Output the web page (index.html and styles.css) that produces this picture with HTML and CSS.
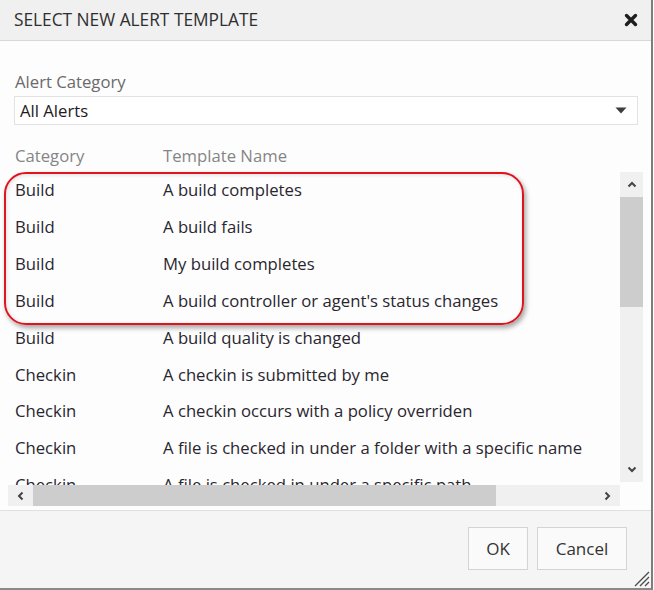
FILE: index.html
```html
<!DOCTYPE html>
<html>
<head>
<meta charset="utf-8">
<link rel="stylesheet" href="styles.css">
</head>
<body>
<div class="dialog">
  <header class="titlebar">
    <h1 class="title">SELECT NEW ALERT TEMPLATE</h1>
    <svg class="close" width="14" height="14" viewBox="0 0 14 14"><path d="M2.5 2.5 L11.5 11.5 M11.5 2.5 L2.5 11.5" stroke="#1e1e1e" stroke-width="3.4" stroke-linecap="round"/></svg>
  </header>
  <main class="content">
    <div class="field-label">Alert Category</div>
    <div class="select">
      <span class="select-value">All Alerts</span>
      <svg class="caret" width="12" height="7" viewBox="0 0 12 7"><path d="M0.5 0.5 H11.5 L6 6.5 Z" fill="#3d3d3d"/></svg>
    </div>
    <div class="grid-head">
      <span class="col-cat">Category</span>
      <span class="col-name">Template Name</span>
    </div>
    <div class="grid">
      <div class="viewport">
        <div class="row"><span class="col-cat">Build</span><span class="col-name">A build completes</span></div>
        <div class="row"><span class="col-cat">Build</span><span class="col-name">A build fails</span></div>
        <div class="row"><span class="col-cat">Build</span><span class="col-name">My build completes</span></div>
        <div class="row"><span class="col-cat">Build</span><span class="col-name">A build controller or agent's status changes</span></div>
        <div class="row"><span class="col-cat">Build</span><span class="col-name">A build quality is changed</span></div>
        <div class="row"><span class="col-cat">Checkin</span><span class="col-name">A checkin is submitted by me</span></div>
        <div class="row"><span class="col-cat">Checkin</span><span class="col-name">A checkin occurs with a policy overriden</span></div>
        <div class="row"><span class="col-cat">Checkin</span><span class="col-name">A file is checked in under a folder with a specific name</span></div>
        <div class="row"><span class="col-cat">Checkin</span><span class="col-name">A file is checked in under a specific path</span></div>
      </div>
      <div class="vscroll">
        <div class="sb-btn sb-up"><svg width="10" height="7" viewBox="0 0 10 7"><path d="M1.5 5.5 L5 2 L8.5 5.5" fill="none" stroke="#444" stroke-width="2"/></svg></div>
        <div class="v-thumb"></div>
        <div class="v-track"></div>
        <div class="sb-btn sb-down"><svg width="10" height="7" viewBox="0 0 10 7"><path d="M1.5 1.5 L5 5 L8.5 1.5" fill="none" stroke="#444" stroke-width="2"/></svg></div>
      </div>
      <div class="hscroll">
        <div class="sb-btn sb-left"><svg width="7" height="10" viewBox="0 0 7 10"><path d="M5.5 1.5 L2 5 L5.5 8.5" fill="none" stroke="#444" stroke-width="2"/></svg></div>
        <div class="h-thumb"></div>
        <div class="h-track"></div>
        <div class="sb-btn sb-right"><svg width="7" height="10" viewBox="0 0 7 10"><path d="M1.5 1.5 L5 5 L1.5 8.5" fill="none" stroke="#444" stroke-width="2"/></svg></div>
      </div>
      <div class="corner"></div>
      <div class="highlight"></div>
    </div>
  </main>
  <footer class="footer">
    <button class="btn btn-ok">OK</button>
    <button class="btn btn-cancel">Cancel</button>
    <svg class="grip" width="18" height="18" viewBox="0 0 18 18"><path d="M17 3 L3 17 M17 8 L8 17 M17 13 L13 17" stroke="#4a4a4a" stroke-width="1.3"/></svg>
  </footer>
</div>
</body>
</html>
```
FILE: styles.css
```css
* { box-sizing: border-box; }
html, body { margin: 0; padding: 0; background: #ffffff; }
body { font-family: "Open Sans", "Noto Sans", sans-serif; font-size: 16.7px; color: #2a2630; }

.dialog {
  width: 653px;
  height: 590px;
  position: relative;
  background: #fdfdfd;
  border-right: 2px solid #7d7d7d;
  border-bottom: 2px solid #8a8a8a;
  display: flex;
  flex-direction: column;
}

.titlebar {
  height: 41px;
  flex: none;
  background: #f0f0f0;
  border-bottom: 1px solid #d8d8d8;
  display: flex;
  align-items: center;
  justify-content: space-between;
  padding: 0 13px 0 14px;
}
.title { margin: 0; font-size: 17.3px; font-weight: normal; color: #2e2e2e; line-height: 24px; }
.close { display: block; }

.content { flex: 1; padding: 30px 0 0 0; }
.field-label { margin-left: 15px; line-height: 22px; height: 22px; color: #6a6a6a; }
.select {
  margin: 3px 0 0 14px;
  width: 624px;
  height: 29px;
  border: 1px solid #e2e2e2;
  background: #ffffff;
  display: flex;
  align-items: center;
  justify-content: space-between;
  padding: 0 10px 0 5px;
  color: #1e1a22;
}
.caret { display: block; }

.grid-head { display: flex; margin: 20px 0 0 15px; line-height: 22px; height: 27px; color: #858585; }
.col-cat { width: 148px; flex: none; white-space: nowrap; }
.col-name { white-space: nowrap; }

.grid {
  position: relative;
  margin-left: 8px;
  display: grid;
  grid-template-columns: 612px 23px;
  grid-template-rows: 313px 21px;
}
.viewport { overflow: hidden; padding-left: 7px; }
.row { display: flex; height: 36.85px; align-items: center; line-height: 22px; }

.vscroll {
  height: 310px;
  background: #f0f0f0;
  display: flex;
  flex-direction: column;
}
.sb-btn { display: flex; align-items: center; justify-content: center; flex: none; }
.sb-btn svg { display: block; }
.sb-up, .sb-down { height: 25px; }
.v-thumb { height: 110px; background: #cdcdcd; flex: none; }
.v-track { flex: 1; }

.hscroll {
  grid-column: 1;
  grid-row: 2;
  background: #f0f0f0;
  display: flex;
}
.sb-left, .sb-right { width: 25px; }
.h-thumb { width: 463px; background: #cdcdcd; flex: none; }
.h-track { flex: 1; }
.corner { background: #fdfdfd; }

.highlight {
  position: absolute;
  left: -4px;
  top: 0;
  width: 520px;
  height: 153px;
  border: 2px solid #e0141c;
  border-radius: 22px;
  box-shadow: 2px 3px 5px rgba(0,0,0,0.35), inset 1px 1px 4px rgba(0,0,0,0.12);
  pointer-events: none;
}

.footer {
  margin-top: 4px;
  height: 78px;
  flex: none;
  background: #f5f5f5;
  border-top: 1px solid #e0e0e0;
  display: flex;
  justify-content: flex-end;
  align-items: flex-start;
  gap: 9px;
  padding: 16px 24px 0 0;
  position: relative;
}
.btn {
  height: 43px;
  border: 1px solid #d4d4d4;
  background: #fafafa;
  font-family: "Open Sans", "Noto Sans", sans-serif;
  font-size: 17px;
  color: #333;
  padding: 0;
}
.btn-ok { width: 60px; }
.btn-cancel { width: 90px; }
.grip { position: absolute; right: 1px; bottom: 1px; }
```
